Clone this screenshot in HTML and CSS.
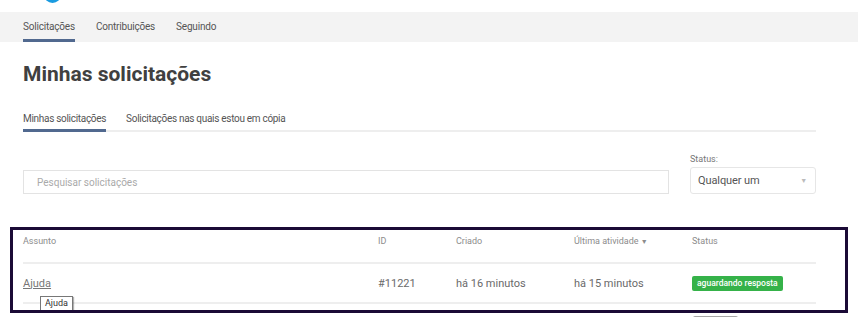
FILE: index.html
```html
<!DOCTYPE html>
<html lang="pt-BR">
<head>
    <meta charset="UTF-8">
    <title>Minhas solicitações</title>
    <link rel="stylesheet" href="styles.css">
</head>
<body>
    <div class="topo">
        <span class="logo"></span>
    </div>
    <nav class="menu">
        <a class="ativo" href="#">Solicitações</a>
        <a href="#">Contribuições</a>
        <a href="#">Seguindo</a>
    </nav>
    <main class="conteudo">
        <h1>Minhas solicitações</h1>
        <div class="abas">
            <a class="ativo" href="#">Minhas solicitações</a>
            <a href="#">Solicitações nas quais estou em cópia</a>
        </div>
        <div class="filtros">
            <input class="busca" type="text" placeholder="Pesquisar solicitações">
            <div class="status-filtro">
                <label>Status:</label>
                <div class="seletor">
                    <span>Qualquer um</span>
                    <span class="seta">▼</span>
                </div>
            </div>
        </div>
        <div class="tabela-area">
            <table class="tabela">
                <thead>
                    <tr>
                        <th class="col-assunto">Assunto</th>
                        <th class="col-id">ID</th>
                        <th class="col-criado">Criado</th>
                        <th class="col-ativ">Última atividade <span class="ordem">▼</span></th>
                        <th>Status</th>
                    </tr>
                </thead>
                <tbody>
                    <tr>
                        <td><a class="link" href="#">Ajuda</a></td>
                        <td>#11221</td>
                        <td>há 16 minutos</td>
                        <td>há 15 minutos</td>
                        <td><span class="badge">aguardando resposta</span></td>
                    </tr>
                </tbody>
            </table>
            <span class="proxima"></span>
            <span class="dica">Ajuda</span>
            <div class="destaque"></div>
        </div>
    </main>
</body>
</html>
```

FILE: styles.css
```css
body {
    margin: 0;
    font-family: Roboto, "Liberation Sans", sans-serif;
    color: #555;
    background: #fff;
    overflow: hidden;
}

a {
    color: inherit;
    text-decoration: none;
}

.topo {
    height: 12px;
    position: relative;
    overflow: hidden;
}

.logo {
    position: absolute;
    left: 44px;
    top: -14px;
    width: 17px;
    height: 17px;
    border-radius: 50%;
    background: #1a9be0;
}

.menu {
    background: #f3f3f3;
    height: 30px;
    padding-left: 23px;
    display: flex;
    gap: 21px;
}

.menu a {
    font-size: 10px;
    letter-spacing: -0.2px;
    padding-top: 2px;
    line-height: 25px;
    color: #555;
    border-bottom: 3px solid transparent;
}

.menu a.ativo {
    border-bottom-color: #51698f;
}

.conteudo {
    padding: 0 42px 0 23px;
}

h1 {
    margin: 20px 0 0;
    font-size: 21px;
    font-weight: 700;
    color: #404040;
    line-height: 24px;
}

.abas {
    margin-top: 26px;
    display: flex;
    gap: 20px;
    border-bottom: 2px solid #eee;
}

.abas a {
    font-size: 10px;
    letter-spacing: -0.3px;
    line-height: 14px;
    padding-bottom: 3px;
    margin-bottom: -2px;
    color: #555;
    border-bottom: 3px solid transparent;
}

.abas a.ativo {
    border-bottom-color: #51698f;
}

.filtros {
    display: flex;
    align-items: flex-end;
    gap: 21px;
    margin-top: 22px;
}

.busca {
    flex: 1;
    height: 24px;
    box-sizing: border-box;
    border: 1px solid #e3e3e3;
    padding: 0 13px;
    font-family: inherit;
    font-size: 10px;
    color: #555;
}

.busca::placeholder {
    color: #aaa;
}

.status-filtro {
    width: 126px;
    display: flex;
    flex-direction: column;
}

.status-filtro label {
    font-size: 9px;
    color: #777;
    margin-bottom: 3px;
}

.seletor {
    height: 27px;
    box-sizing: border-box;
    border: 1px solid #e6e6e6;
    border-radius: 3px;
    padding: 0 8px 0 7px;
    display: flex;
    align-items: center;
    justify-content: space-between;
    font-size: 11px;
    letter-spacing: -0.1px;
    color: #555;
}

.seta {
    font-size: 7px;
    color: #bbb;
}

.tabela-area {
    position: relative;
    margin-top: 39px;
}

.tabela {
    width: 100%;
    border-collapse: collapse;
}

.tabela th {
    text-align: left;
    vertical-align: top;
    font-weight: 400;
    font-size: 9px;
    color: #8c8c8c;
    line-height: 12px;
    padding: 2px 0 14px;
    border-bottom: 2px solid #eee;
}

.col-assunto { width: 355px; }
.col-id { width: 78px; }
.col-criado { width: 118px; }
.col-ativ { width: 118px; }

.ordem {
    font-size: 7px;
}

.tabela td {
    font-size: 11px;
    color: #6a6a6a;
    height: 38px;
    padding: 0;
    border-bottom: 2px solid #eee;
}

.link {
    text-decoration: underline;
    color: #777;
}

.badge {
    display: inline-block;
    background: #35b249;
    color: #fff;
    font-size: 8.5px;
    font-weight: 500;
    padding: 0 5px;
    line-height: 15px;
    border-radius: 2px;
}

/* topo do selo da linha seguinte, fora da janela */
.proxima {
    display: block;
    margin: 12px 0 0 670px;
    width: 45px;
    height: 15px;
    border-radius: 2px;
    background: #a5a5a5;
}

.dica {
    position: absolute;
    left: 17px;
    top: 63px;
    background: #fff;
    border: 1px solid #777;
    box-shadow: 1px 1px 1px rgba(0, 0, 0, 0.3);
    font-size: 9px;
    color: #333;
    padding: 1px 4px;
    line-height: 11px;
}

.destaque {
    position: absolute;
    left: -13px;
    right: -32px;
    top: -6px;
    height: 80px;
    border: 3px solid #1b0a36;
}
```
